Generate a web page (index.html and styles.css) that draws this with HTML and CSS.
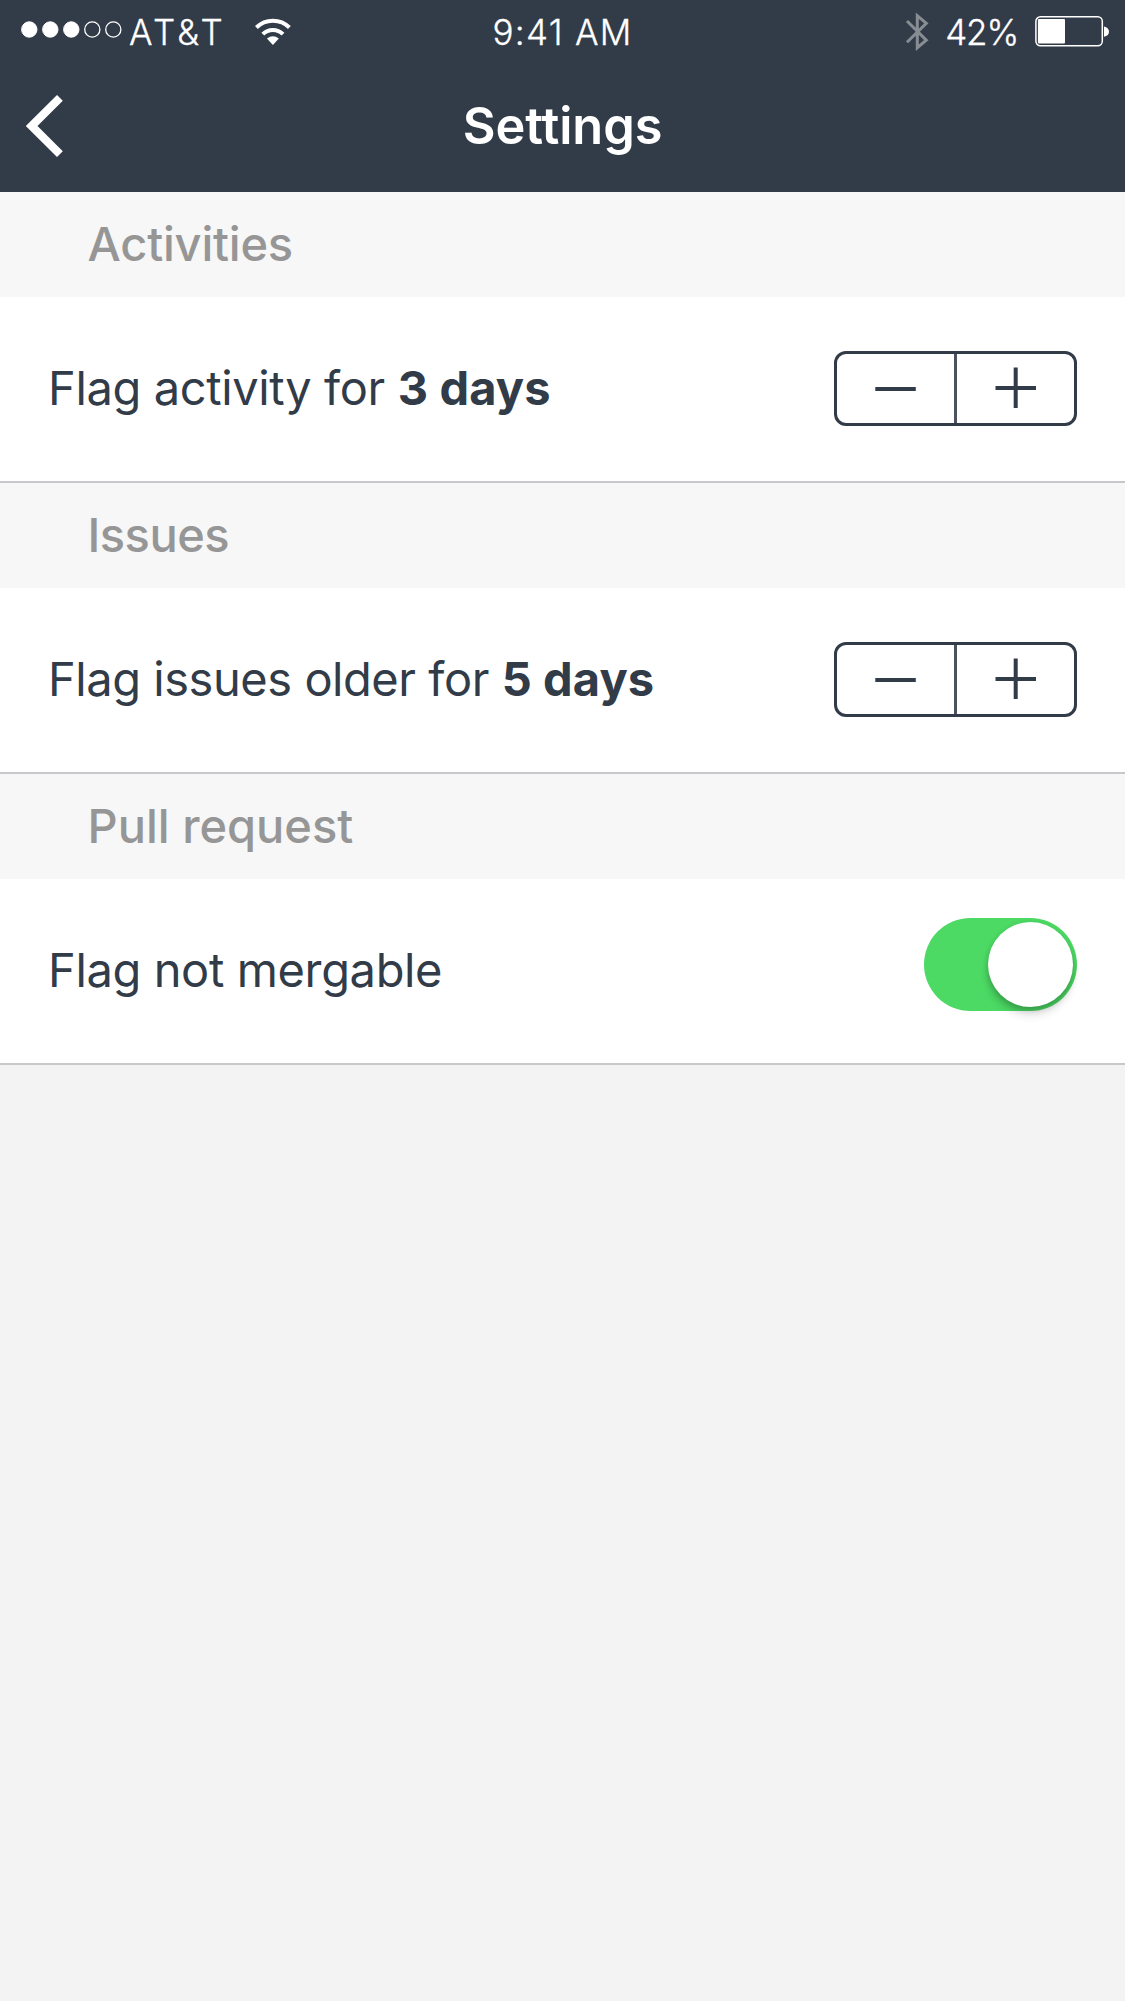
FILE: index.html
```html
<!DOCTYPE html>
<html lang="en">
<head>
<meta charset="utf-8">
<title>Settings</title>
<link rel="stylesheet" href="styles.css">
</head>
<body>
<header class="header">
  <div class="status">
    <div class="status-left">
      <svg class="signal" width="101" height="18" viewBox="0 0 101 18" fill="#fff" stroke="#fff">
        <circle cx="8.3" cy="8.5" r="7.7"/><circle cx="29.3" cy="8.5" r="7.7"/><circle cx="50.3" cy="8.5" r="7.7"/>
        <circle cx="71.3" cy="8.5" r="7.6" fill="none" stroke-width="1.3"/><circle cx="92.3" cy="8.5" r="7.6" fill="none" stroke-width="1.3"/>
      </svg>
      <span class="carrier">AT&amp;T</span>
      <svg class="wifi" width="36" height="28" viewBox="0 0 36 28" fill="none" stroke="#fff" stroke-width="4">
        <path d="M1.4 9.5A23.3 23.3 0 0 1 34.4 9.5"/>
        <path d="M7.8 16.2A14.3 14.3 0 0 1 28 16.2"/>
        <path d="M11.9 20.6Q17.9 15.8 23.9 20.6L17.9 27Z" fill="#fff" stroke="none"/>
      </svg>
    </div>
    <span class="time">9:41 AM</span>
    <div class="status-right">
      <svg width="24" height="40" viewBox="0 0 24 40" fill="none" stroke="#888d94" stroke-width="3">
        <path d="M2 9L21.3 28.1L12.3 35.7V3.7L21.3 11.3L2 30.3"/>
      </svg>
      <span class="percent">42%</span>
      <svg width="75" height="32" viewBox="0 0 75 32">
        <rect x=".9" y=".8" width="66.4" height="29" rx="4.5" fill="none" stroke="#fff" stroke-width="1.5"/>
        <rect x="2.9" y="2.9" width="27.1" height="24.7" rx="1" fill="#fff"/>
        <path d="M69 10.6Q74 12 74 15.8T69 20.8Z" fill="#fff"/>
      </svg>
    </div>
  </div>
  <div class="navbar">
    <svg class="back" width="44" height="66" viewBox="0 0 44 66" fill="none" stroke="#fff" stroke-width="8.2">
      <path d="M39.9 4.8L11.6 33L39.9 61.2"/>
    </svg>
    <h1 class="title">Settings</h1>
  </div>
</header>
<main>
  <section>
    <h2 class="section-title activities">Activities</h2>
    <div class="row">
      <p class="label">Flag activity for <b>3 days</b></p>
      <div class="stepper">
        <div class="step"><svg width="117" height="69" viewBox="0 0 117 69"><path d="M38.3 35H78.8" stroke="#323b48" stroke-width="4"/></svg></div>
        <div class="step"><svg width="117" height="69" viewBox="0 0 117 69"><path d="M38.5 34H79M58.7 13.6V54" stroke="#323b48" stroke-width="4"/></svg></div>
      </div>
    </div>
  </section>
  <section>
    <h2 class="section-title issues">Issues</h2>
    <div class="row">
      <p class="label older">Flag issues older for <b>5 days</b></p>
      <div class="stepper">
        <div class="step"><svg width="117" height="69" viewBox="0 0 117 69"><path d="M38.3 35H78.8" stroke="#323b48" stroke-width="4"/></svg></div>
        <div class="step"><svg width="117" height="69" viewBox="0 0 117 69"><path d="M38.5 34H79M58.7 13.6V54" stroke="#323b48" stroke-width="4"/></svg></div>
      </div>
    </div>
  </section>
  <section>
    <h2 class="section-title">Pull request</h2>
    <div class="row">
      <p class="label">Flag not mergable</p>
      <div class="toggle"><div class="knob"></div></div>
    </div>
  </section>
</main>
</body>
</html>
```
FILE: styles.css
```css
* { box-sizing: border-box; }
body { margin: 0; min-height: 2001px; background: #f3f3f3; color: #323b48; font-family: Inter, "Liberation Sans", sans-serif; }
h1, h2, p { margin: 0; }
svg { display: block; flex: none; }

.header { height: 192px; background: #323b48; color: #fff; }
.status { height: 64px; padding: 0 15px 0 21px; display: grid; grid-template-columns: 425px 1fr 431px; align-items: center; font-size: 35px; font-weight: 300; white-space: nowrap; -webkit-text-stroke: .3px #fff; }
.status-left, .status-right { display: flex; align-items: center; }
.status-right { justify-content: flex-end; }
.signal { margin: 0 7px 5px 0; }
.carrier { letter-spacing: 3.3px; margin-right: 29px; }
.time { letter-spacing: 1.3px; text-align: center; }
.percent { letter-spacing: -1.2px; margin: 0 17px 0 16px; }

.navbar { height: 128px; padding: 0 20px 4px; display: grid; grid-template-columns: 44px 1fr 44px; align-items: center; }
.title { padding-bottom: 2px; font-size: 50.5px; font-weight: 600; letter-spacing: -.07px; text-align: center; }

.section-title { height: 105px; padding-left: 87.5px; background: #f7f7f7; color: #969696; font-size: 47px; font-weight: 500; line-height: 103px; letter-spacing: 0; }
.activities { letter-spacing: -.21px; }
.issues { letter-spacing: -.5px; }

.row { height: 186px; padding: 0 48px 1px; display: flex; align-items: center; justify-content: space-between; background: #fff; border-bottom: 2px solid #c8c7cc; }
.label { padding-bottom: 2px; font-size: 47px; letter-spacing: -.37px; white-space: nowrap; }
.label b { font-weight: 700; letter-spacing: .12px; }
.older { letter-spacing: -.45px; }

.stepper { width: 243px; height: 75px; display: flex; border: 3px solid #323b48; border-radius: 12px; }
.step { width: 117px; }
.step + .step { width: 120px; border-left: 3px solid #4b535f; }

.toggle { width: 153px; height: 93px; margin-bottom: 12px; padding: 4px; display: flex; justify-content: flex-end; border-radius: 47px; background: #4cd964; }
.knob { width: 85px; height: 85px; border-radius: 50%; background: #fff; box-shadow: 0 9px 9px rgba(0,0,0,.1), 0 3px 6px rgba(0,0,0,.22); }
```
